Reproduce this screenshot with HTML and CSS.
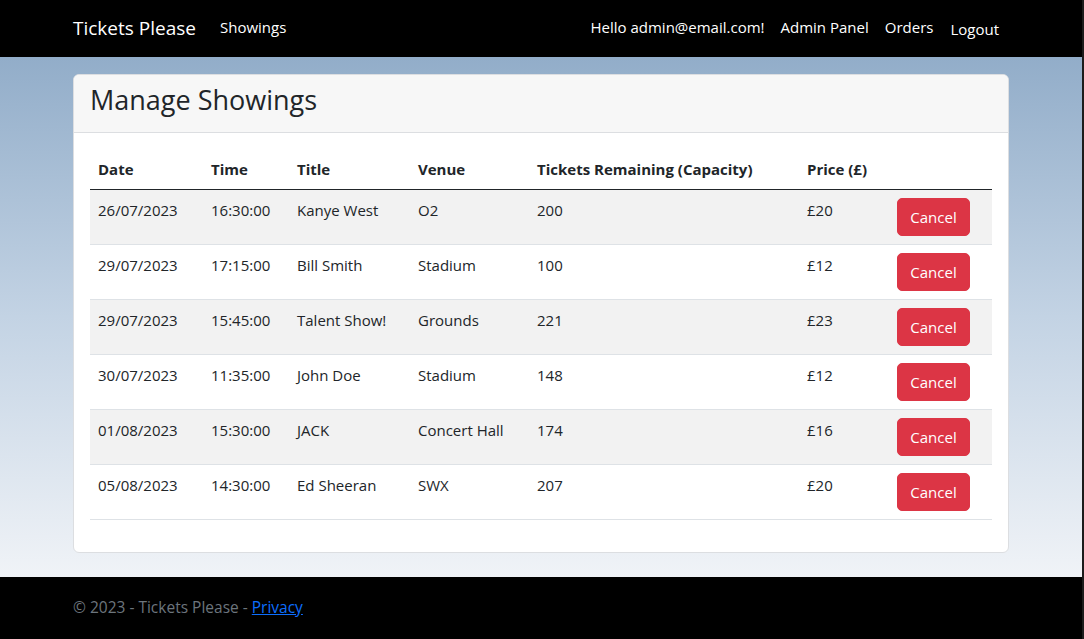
FILE: index.html
```html
<!DOCTYPE html>
<html lang="en">
<head>
<meta charset="utf-8">
<title>Manage Showings - Tickets Please</title>
<link rel="stylesheet" href="styles.css">
</head>
<body>
<div class="page">
  <header class="navbar">
    <div class="container nav-inner">
      <a class="brand" href="#">Tickets Please</a>
      <nav class="nav-left">
        <a class="nav-link" href="#">Showings</a>
      </nav>
      <nav class="nav-right">
        <a class="nav-link" href="#">Hello admin@email.com!</a>
        <a class="nav-link" href="#">Admin Panel</a>
        <a class="nav-link" href="#">Orders</a>
        <button class="nav-link nav-btn" type="button">Logout</button>
      </nav>
    </div>
  </header>

  <main class="main">
    <div class="container">
      <section class="card">
        <div class="card-header">
          <h3 class="card-title">Manage Showings</h3>
        </div>
        <div class="card-body">
          <table class="table">
            <colgroup>
              <col class="c-date"><col class="c-time"><col class="c-title"><col class="c-venue"><col class="c-tickets"><col class="c-price"><col class="c-action">
            </colgroup>
            <thead>
              <tr>
                <th>Date</th><th>Time</th><th>Title</th><th>Venue</th><th>Tickets Remaining (Capacity)</th><th>Price (£)</th><th></th>
              </tr>
            </thead>
            <tbody>
              <tr><td>26/07/2023</td><td>16:30:00</td><td>Kanye West</td><td>O2</td><td>200</td><td>£20</td><td><button class="btn-danger" type="button">Cancel</button></td></tr>
              <tr><td>29/07/2023</td><td>17:15:00</td><td>Bill Smith</td><td>Stadium</td><td>100</td><td>£12</td><td><button class="btn-danger" type="button">Cancel</button></td></tr>
              <tr><td>29/07/2023</td><td>15:45:00</td><td>Talent Show!</td><td>Grounds</td><td>221</td><td>£23</td><td><button class="btn-danger" type="button">Cancel</button></td></tr>
              <tr><td>30/07/2023</td><td>11:35:00</td><td>John Doe</td><td>Stadium</td><td>148</td><td>£12</td><td><button class="btn-danger" type="button">Cancel</button></td></tr>
              <tr><td>01/08/2023</td><td>15:30:00</td><td>JACK</td><td>Concert Hall</td><td>174</td><td>£16</td><td><button class="btn-danger" type="button">Cancel</button></td></tr>
              <tr><td>05/08/2023</td><td>14:30:00</td><td>Ed Sheeran</td><td>SWX</td><td>207</td><td>£20</td><td><button class="btn-danger" type="button">Cancel</button></td></tr>
            </tbody>
          </table>
        </div>
      </section>
    </div>
  </main>

  <footer class="footer">
    <div class="container">
      &copy; 2023 - Tickets Please - <a class="footer-link" href="#">Privacy</a>
    </div>
  </footer>
</div>
</body>
</html>
```

FILE: styles.css
```css
* { box-sizing: border-box; }

html, body {
  margin: 0;
  padding: 0;
}

body {
  font-family: "Open Sans", "Noto Sans", "Liberation Sans", sans-serif;
  font-size: 15px;
  line-height: 24px;
  color: #212529;
  background: #1c1c1c;
  padding-right: 2px;
}

.page {
  min-height: 100vh;
  display: flex;
  flex-direction: column;
}

.container {
  width: 960px;
  margin: 0 auto;
  padding: 0 12px;
}

/* Navbar */
.navbar {
  background: #000;
  height: 57px;
  display: flex;
  align-items: center;
  padding-bottom: 3px;
}

.nav-inner {
  display: flex;
  align-items: center;
}

.brand {
  color: #fff;
  text-decoration: none;
  font-size: 19px;
  line-height: 30px;
  margin-right: 16px;
  padding-top: 1px;
}

.nav-left {
  display: flex;
  flex: 1;
}

.nav-right {
  display: flex;
  align-items: center;
  padding-right: 2px;
}

.nav-link {
  color: #fff;
  text-decoration: none;
  padding: 8px;
  font-size: 15px;
  line-height: 24px;
}

.nav-btn {
  background: none;
  border: 0;
  font-family: inherit;
  margin-left: 1px;
  padding-top: 10px;
  padding-bottom: 6px;
}

/* Main */
.main {
  flex: 1;
  background: linear-gradient(to bottom, #92adc9 0%, #c3d3e4 50%, #f0f3f7 100%);
  padding-top: 17px;
  padding-bottom: 24px;
}

.card {
  background: #fff;
  border: 1px solid #dcdee1;
  border-radius: 6px;
  overflow: hidden;
}

.card-header {
  background: #f7f7f7;
  border-bottom: 1px solid #dcdee1;
  padding: 6px 16px 8px 16px;
  height: 58px;
}

.card-title {
  margin: 0;
  font-size: 27px;
  font-weight: 500;
  line-height: 38px;
  color: #212529;
}

.card-body {
  padding: 16px;
}

/* Table */
.table {
  width: 902px;
  border-collapse: collapse;
  table-layout: fixed;
  margin-bottom: 16px;
}

.c-date { width: 113px; }
.c-time { width: 86px; }
.c-title { width: 121px; }
.c-venue { width: 119px; }
.c-tickets { width: 270px; }
.c-price { width: 90px; }
.c-action { width: 103px; }

.table th,
.table td {
  padding: 8px;
  text-align: left;
  vertical-align: top;
  border-bottom: 1px solid #dee2e6;
  white-space: nowrap;
}

.table th {
  font-weight: 700;
  border-bottom: 1px solid #212529;
  height: 40px;
}

.table tbody tr:nth-child(odd) td {
  background: #f2f2f2;
}

.table td {
  height: 55px;
}

.btn-danger {
  display: inline-block;
  background: #dc3545;
  color: #fff;
  border: 1px solid #dc3545;
  border-radius: 5px;
  font-family: inherit;
  font-size: 15px;
  line-height: 24px;
  padding: 6px 11px;
  width: 73px;
  height: 38px;
  cursor: pointer;
}

/* Footer */
.footer {
  background: #000;
  height: 62px;
  color: #6c757d;
  font-size: 15.5px;
  line-height: 24px;
  display: flex;
  align-items: center;
  padding-bottom: 2px;
}

.footer-link {
  color: #0d6efd;
  text-decoration: underline;
}
```
